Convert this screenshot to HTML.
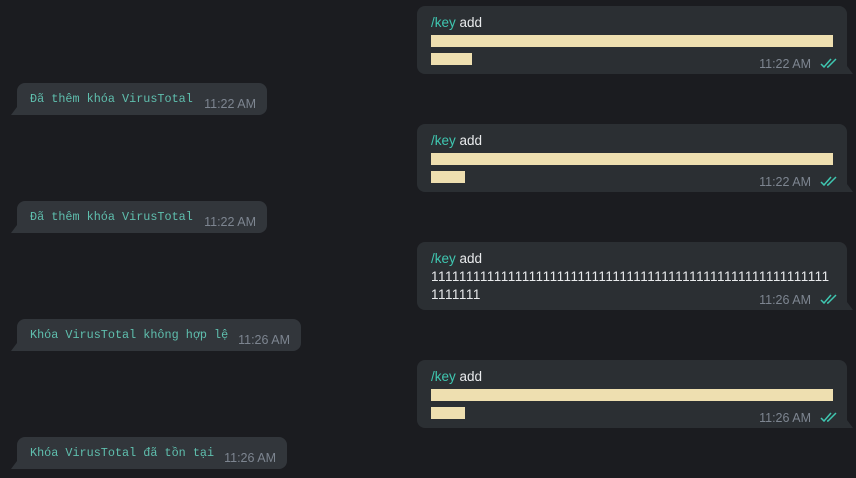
<!DOCTYPE html>
<html><head><meta charset="utf-8"><style>
body{margin:0;width:856px;height:478px;background:#1b1c20;position:relative;overflow:hidden;font-family:"Liberation Sans",sans-serif}
.o{position:absolute;left:417px;width:430px;height:68px;background:#2b2f33;border-radius:8px 8px 0 8px}
.o:after{content:"";position:absolute;right:-6px;bottom:0;width:0;height:0;border-left:6px solid #2b2f33;border-top:8px solid transparent}
.o .c{position:absolute;left:14px;top:8px;color:#e8eaec;font-size:13.5px;line-height:18px}
.ones{letter-spacing:0.47px}
.k{color:#3fc7b1}
.bar{position:absolute;left:14px;height:12px;background:#eedfb0}
.t{position:absolute;font-size:12.5px;color:#7d8590}
.o .t{right:36px;bottom:3px}
.chk{position:absolute;right:9px;bottom:6px}
.i{position:absolute;left:17px;height:32px;background:#32363b;border-radius:8px 8px 8px 0}
.i:before{content:"";position:absolute;left:-6px;bottom:0;border-right:6px solid #32363b;border-top:8px solid transparent}
.i .m{position:absolute;left:13px;top:9px;font-family:"Liberation Mono",monospace;font-size:11.8px;color:#5fbfae;white-space:nowrap}
.i .t{bottom:4px;right:11px}
</style></head><body>
<div class="o" style="top:6px"><div class="c"><span class="k">/key</span> add</div><div class="bar" style="top:29px;width:402px"></div><div class="bar" style="top:47px;width:41px"></div><div class="t">11:22 AM</div><svg class="chk" width="18" height="10" viewBox="0 0 18 10"><path d="M1 6l3 3 7-8M7 9l1 0 8-8" fill="none" stroke="#3fc7b1" stroke-width="1.5"/></svg></div>
<div class="i" style="top:83px;width:250px"><div class="m">Đã thêm khóa VirusTotal</div><div class="t">11:22 AM</div></div>
<div class="o" style="top:124px"><div class="c"><span class="k">/key</span> add</div><div class="bar" style="top:29px;width:402px"></div><div class="bar" style="top:47px;width:34px"></div><div class="t">11:22 AM</div><svg class="chk" width="18" height="10" viewBox="0 0 18 10"><path d="M1 6l3 3 7-8M7 9l1 0 8-8" fill="none" stroke="#3fc7b1" stroke-width="1.5"/></svg></div>
<div class="i" style="top:201px;width:250px"><div class="m">Đã thêm khóa VirusTotal</div><div class="t">11:22 AM</div></div>
<div class="o" style="top:242px"><div class="c"><span class="k">/key</span> add<br><span class="ones">111111111111111111111111111111111111111111111111111111111<br>1111111</span></div><div class="t">11:26 AM</div><svg class="chk" width="18" height="10" viewBox="0 0 18 10"><path d="M1 6l3 3 7-8M7 9l1 0 8-8" fill="none" stroke="#3fc7b1" stroke-width="1.5"/></svg></div>
<div class="i" style="top:319px;width:284px"><div class="m">Khóa VirusTotal không hợp lệ</div><div class="t">11:26 AM</div></div>
<div class="o" style="top:360px"><div class="c"><span class="k">/key</span> add</div><div class="bar" style="top:29px;width:402px"></div><div class="bar" style="top:47px;width:34px"></div><div class="t">11:26 AM</div><svg class="chk" width="18" height="10" viewBox="0 0 18 10"><path d="M1 6l3 3 7-8M7 9l1 0 8-8" fill="none" stroke="#3fc7b1" stroke-width="1.5"/></svg></div>
<div class="i" style="top:437px;width:270px"><div class="m">Khóa VirusTotal đã tồn tại</div><div class="t">11:26 AM</div></div>
</body></html>
